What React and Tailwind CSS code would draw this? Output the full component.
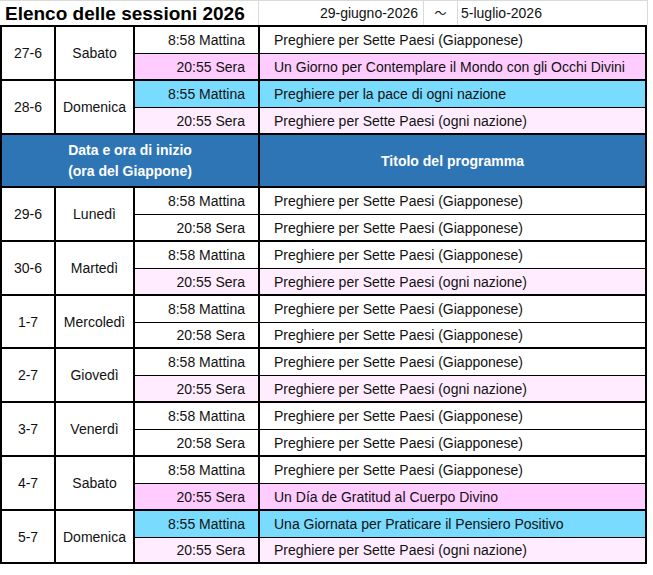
import React from "react";

const GIAP = "Preghiere per Sette Paesi (Giapponese)";
const OGNI = "Preghiere per Sette Paesi (ogni nazione)";

const BG = {
  white: "bg-white",
  pink: "bg-[#ffccff]",
  light: "bg-[#ffedff]",
  cyan: "bg-[#79dbfe]",
};

const before = [
  { date: "27-6", day: "Sabato", h: "h-[54px]", rows: [["8:58 Mattina", GIAP, "white"], ["20:55 Sera", "Un Giorno per Contemplare il Mondo con gli Occhi Divini", "pink"]] },
  { date: "28-6", day: "Domenica", h: "h-[54px]", rows: [["8:55 Mattina", "Preghiere per la pace di ogni nazione", "cyan"], ["20:55 Sera", OGNI, "light"]] },
];

const after = [
  { date: "29-6", day: "Lunedì", h: "h-[54px]", rows: [["8:58 Mattina", GIAP, "white"], ["20:58 Sera", GIAP, "white"]] },
  { date: "30-6", day: "Martedì", h: "h-[54px]", rows: [["8:58 Mattina", GIAP, "white"], ["20:55 Sera", OGNI, "light"]] },
  { date: "1-7", day: "Mercoledì", h: "h-[53px]", rows: [["8:58 Mattina", GIAP, "white"], ["20:58 Sera", GIAP, "white"]] },
  { date: "2-7", day: "Giovedì", h: "h-[54px]", rows: [["8:58 Mattina", GIAP, "white"], ["20:55 Sera", OGNI, "light"]] },
  { date: "3-7", day: "Venerdì", h: "h-[54px]", rows: [["8:58 Mattina", GIAP, "white"], ["20:58 Sera", GIAP, "white"]] },
  { date: "4-7", day: "Sabato", h: "h-[54px]", rows: [["8:58 Mattina", GIAP, "white"], ["20:55 Sera", "Un Día de Gratitud al Cuerpo Divino", "pink"]] },
  { date: "5-7", day: "Domenica", h: "h-[51px]", last: true, rows: [["8:55 Mattina", "Una Giornata per Praticare il Pensiero Positivo", "cyan"], ["20:55 Sera", OGNI, "light"]] },
];

function Group({ g }) {
  return (
    <div className={`flex ${g.h} ${g.last ? "" : "border-b-2 border-black"}`}>
      <div className="flex w-[54px] shrink-0 items-center justify-center border-r-2 border-black">{g.date}</div>
      <div className="flex w-[79px] shrink-0 items-center justify-center border-r-2 border-black">{g.day}</div>
      <div className="flex flex-1 flex-col">
        {g.rows.map(([time, title, bg], i) => (
          <div key={i} className={`flex ${i === 0 ? "h-[27px] border-b border-black" : "flex-1"} ${BG[bg]}`}>
            <div className="flex w-[125px] shrink-0 items-center justify-end border-r-2 border-black pr-[13px]">{time}</div>
            <div className="flex flex-1 items-center pl-[14px] whitespace-nowrap">{title}</div>
          </div>
        ))}
      </div>
    </div>
  );
}

export default function App() {
  return (
    <div className="h-[575px] w-[653px] bg-white text-[14px] leading-none text-[#111]" style={{ fontFamily: '"Liberation Sans", Arial, sans-serif' }}>
      <div className="flex h-[25px] w-[648px] border-t border-[#dadada]">
        <div className="flex w-[259px] items-center border-r border-[#dadada] pl-[5px] text-[19px] font-bold text-black">Elenco delle sessioni 2026</div>
        <div className="flex w-[165px] items-center justify-end border-r border-[#dadada] pr-[5px]">29-giugno-2026</div>
        <div className="flex w-[34px] items-center justify-center border-r border-[#dadada] text-[12px]" style={{ fontFamily: '"Noto Sans CJK JP", sans-serif' }}>～</div>
        <div className="flex flex-1 items-center border-r border-[#dadada] pl-[3px]">5-luglio-2026</div>
      </div>
      <div className="w-[647px] border-2 border-black">
        {before.map((g) => <Group key={g.date} g={g} />)}
        <div className="flex h-[53px] border-b-2 border-black bg-[#2e75b6] font-bold text-white">
          <div className="flex w-[258px] shrink-0 flex-col items-center justify-center border-r-2 border-black leading-[21px]">
            <span>Data e ora di inizio</span>
            <span>(ora del Giappone)</span>
          </div>
          <div className="flex flex-1 items-center justify-center">Titolo del programma</div>
        </div>
        {after.map((g) => <Group key={g.date} g={g} />)}
      </div>
    </div>
  );
}
